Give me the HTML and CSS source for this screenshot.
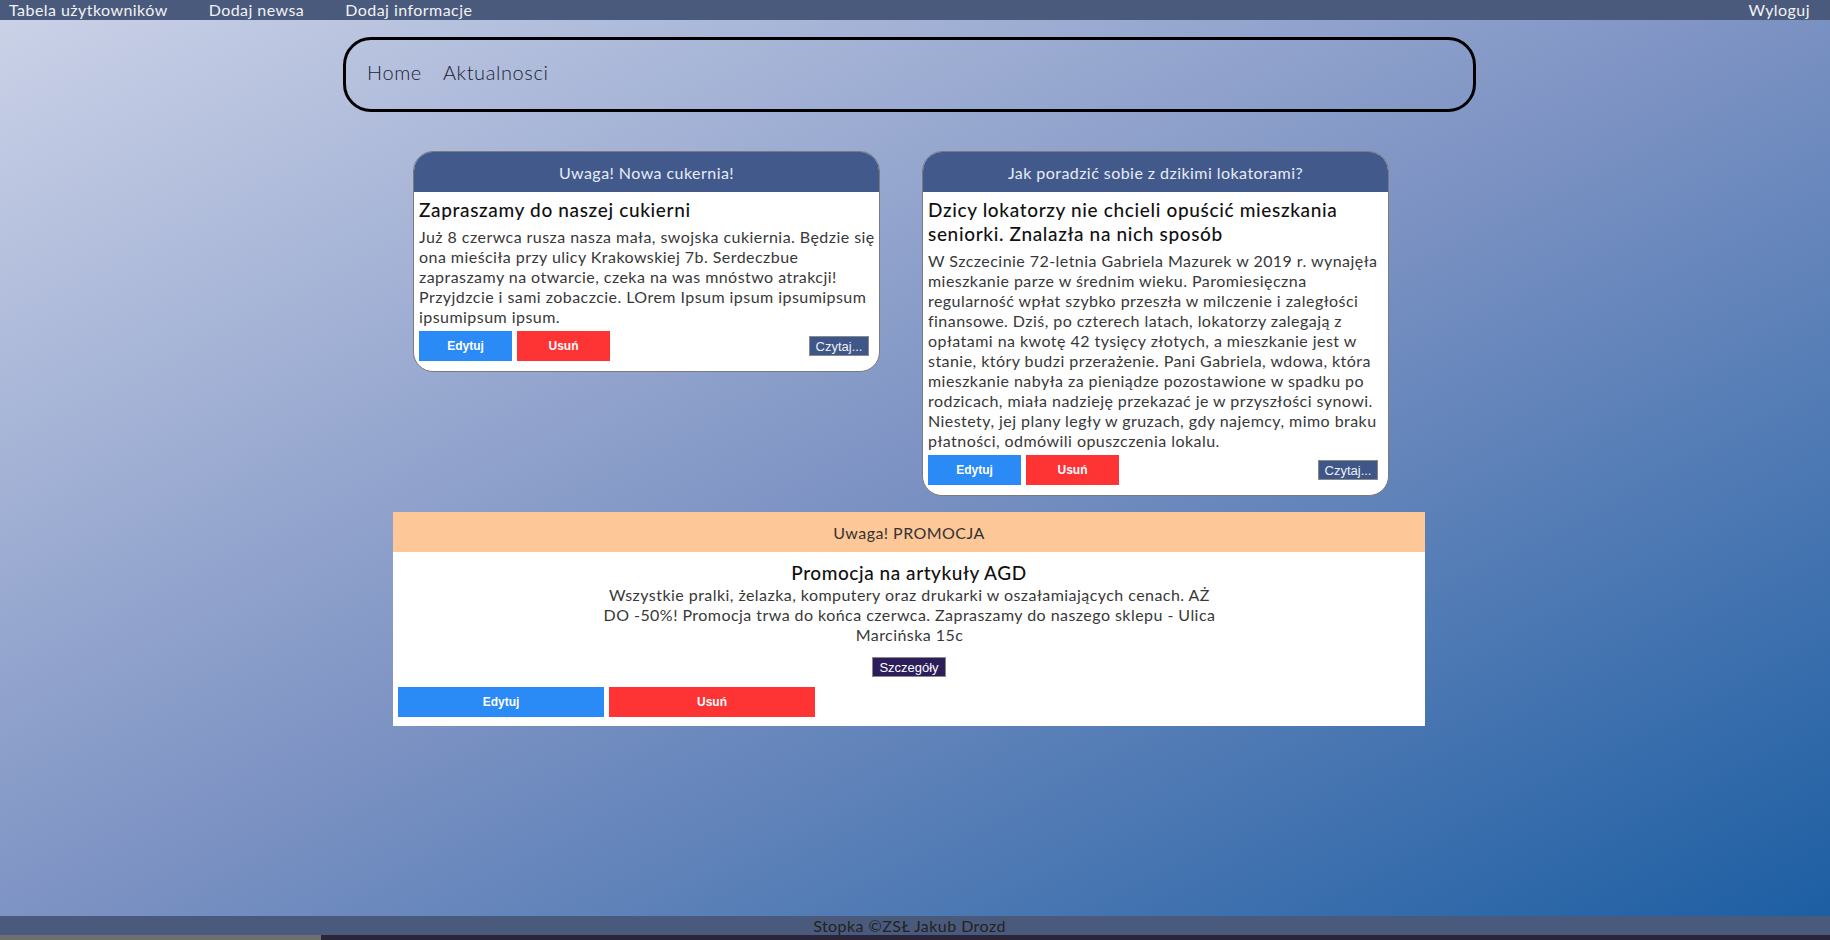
FILE: index.html
```html
<!DOCTYPE html>
<html lang="pl">
<head>
<meta charset="utf-8">
<title>Aktualnosci</title>
<link rel="stylesheet" href="styles.css">
</head>
<body>
<nav class="topbar">
  <div class="topbar-links">
    <a href="#">Tabela użytkowników</a>
    <a href="#">Dodaj newsa</a>
    <a href="#">Dodaj informacje</a>
  </div>
  <a href="#" class="logout">Wyloguj</a>
</nav>

<main class="page">
  <header class="menu-box">
    <a href="#">Home</a>
    <a href="#">Aktualnosci</a>
  </header>

  <section class="cards">
    <article class="card">
      <div class="card-head">Uwaga! Nowa cukernia!</div>
      <div class="card-body">
        <h3 class="card-title">Zapraszamy do naszej cukierni</h3>
        <p class="card-text">Już 8 czerwca rusza nasza mała, swojska cukiernia. Będzie się ona mieściła przy ulicy Krakowskiej 7b. Serdeczbue zapraszamy na otwarcie, czeka na was mnóstwo atrakcji! Przyjdzcie i sami zobaczcie. LOrem Ipsum ipsum ipsumipsum ipsumipsum ipsum.</p>
        <div class="actions">
          <button class="btn btn-edit">Edytuj</button>
          <button class="btn btn-del">Usuń</button>
          <button class="btn-read">Czytaj...</button>
        </div>
      </div>
    </article>

    <article class="card">
      <div class="card-head">Jak poradzić sobie z dzikimi lokatorami?</div>
      <div class="card-body">
        <h3 class="card-title">Dzicy lokatorzy nie chcieli opuścić mieszkania seniorki. Znalazła na nich sposób</h3>
        <p class="card-text">W Szczecinie 72-letnia Gabriela Mazurek w 2019 r. wynajęła mieszkanie parze w średnim wieku. Paromiesięczna regularność wpłat szybko przeszła w milczenie i zaległości finansowe. Dziś, po czterech latach, lokatorzy zalegają z opłatami na kwotę 42 tysięcy złotych, a mieszkanie jest w stanie, który budzi przerażenie. Pani Gabriela, wdowa, która mieszkanie nabyła za pieniądze pozostawione w spadku po rodzicach, miała nadzieję przekazać je w przyszłości synowi. Niestety, jej plany legły w gruzach, gdy najemcy, mimo braku płatności, odmówili opuszczenia lokalu.</p>
        <div class="actions">
          <button class="btn btn-edit">Edytuj</button>
          <button class="btn btn-del">Usuń</button>
          <button class="btn-read">Czytaj...</button>
        </div>
      </div>
    </article>
  </section>

  <section class="promo">
    <div class="promo-head">Uwaga! PROMOCJA</div>
    <div class="promo-body">
      <h3 class="promo-title">Promocja na artykuły AGD</h3>
      <p class="promo-text">Wszystkie pralki, żelazka, komputery oraz drukarki w oszałamiających cenach. AŻ DO -50%! Promocja trwa do końca czerwca. Zapraszamy do naszego sklepu - Ulica Marcińska 15c</p>
      <div class="promo-more"><button class="btn-details">Szczegóły</button></div>
      <div class="promo-actions">
        <button class="btn btn-wide btn-edit">Edytuj</button>
        <button class="btn btn-wide btn-del">Usuń</button>
      </div>
    </div>
  </section>
</main>

<footer class="footer">Stopka ©ZSŁ Jakub Drozd</footer>
<div class="bottom-strip"><span class="strip-grey"></span></div>
</body>
</html>
```

FILE: styles.css
```css
* { box-sizing: border-box; }

html {
  height: 100%;
  background: linear-gradient(to bottom right, #ccd3e8 0%, #7c92c3 50%, #1a5da2 100%);
}

body {
  margin: 0;
  min-height: 100vh;
  display: flex;
  flex-direction: column;
  font-family: Lato, "Noto Sans", sans-serif;
  font-size: 16px;
  letter-spacing: 0.45px;
  color: #333;
}

a { text-decoration: none; color: inherit; }

.topbar {
  height: 20px;
  background: #4a5a7d;
  display: flex;
  justify-content: space-between;
  align-items: center;
  padding: 0 20px 0 9px;
  color: #f2f2f2;
  line-height: 20px;
}

.topbar-links {
  display: flex;
  gap: 41px;
}

.page {
  flex: 1;
  width: 1133px;
  margin-left: 343px;
  padding-top: 17px;
}

.menu-box {
  height: 75px;
  border: 3px solid #000;
  border-radius: 28px;
  display: flex;
  align-items: center;
  gap: 21px;
  padding-left: 21px;
  padding-bottom: 6px;
  font-size: 20px;
  font-weight: 300;
  letter-spacing: 0.6px;
  color: #1c1c34;
}

.cards {
  display: flex;
  align-items: flex-start;
  gap: 42px;
  padding-left: 70px;
  margin-top: 39px;
}

.card {
  width: 467px;
  background: #fff;
  border: 1px solid #7b7b7b;
  border-radius: 20px;
  overflow: hidden;
}

.card-head {
  height: 40px;
  background: #41598b;
  color: #e8ecf4;
  display: flex;
  align-items: center;
  justify-content: center;
  font-size: 16px;
}

.card-body {
  padding: 6px 0 10px 5px;
}

.card-title {
  margin: 0 0 5px;
  font-size: 19px;
  line-height: 24px;
  font-weight: 500;
  letter-spacing: 0.65px;
  color: #111;
}

.card-text {
  margin: 0;
  line-height: 20px;
  color: #383838;
}

.actions {
  display: flex;
  align-items: center;
  gap: 5px;
  margin-top: 4px;
}

.btn {
  width: 93px;
  height: 30px;
  border: none;
  color: #fff;
  font-family: "Liberation Sans", Arial, sans-serif;
  font-weight: bold;
  font-size: 12px;
  letter-spacing: 0;
  padding: 0;
}

.btn-edit { background: #2a8af6; }
.btn-del { background: #fe3334; }

.btn-read {
  margin-left: auto;
  margin-right: 10px;
  width: 60px;
  height: 20px;
  padding: 0;
  background: #3e5688;
  border: 1px solid #8a8a8a;
  color: #eef0f6;
  font-family: "Liberation Sans", Arial, sans-serif;
  font-size: 13px;
  letter-spacing: 0;
}

.promo {
  width: 1032px;
  margin: 16px 0 0 50px;
  background: #fff;
}

.promo-head {
  height: 40px;
  background: #fec797;
  color: #333;
  display: flex;
  align-items: center;
  justify-content: center;
}

.promo-body {
  padding: 9px 0 9px 5px;
}

.promo-title {
  margin: 0;
  font-size: 19px;
  line-height: 24px;
  font-weight: 500;
  letter-spacing: 0.55px;
  color: #111;
  text-align: center;
  padding-right: 5px;
}

.promo-text {
  width: 620px;
  margin: 0 auto;
  line-height: 20px;
  text-align: center;
  color: #383838;
  position: relative;
  left: -2px;
}

.promo-more {
  display: flex;
  justify-content: center;
  margin-top: 12px;
  padding-right: 5px;
}

.btn-details {
  width: 74px;
  height: 20px;
  padding: 0;
  background: #2b1e5a;
  border: 1px solid #8a8a8a;
  color: #fff;
  font-family: "Liberation Sans", Arial, sans-serif;
  font-size: 13px;
  letter-spacing: 0;
}

.promo-actions {
  display: flex;
  gap: 5px;
  margin-top: 10px;
}

.btn-wide { width: 206px; font-size: 12px; }

.footer {
  height: 19px;
  background: #4a5a7d;
  color: #222;
  text-align: center;
  line-height: 19px;
  padding-right: 11px;
}

.bottom-strip {
  height: 5px;
  background: #2a2538;
  display: flex;
}

.strip-grey {
  width: 321px;
  background: #6f6f6f;
}
```
